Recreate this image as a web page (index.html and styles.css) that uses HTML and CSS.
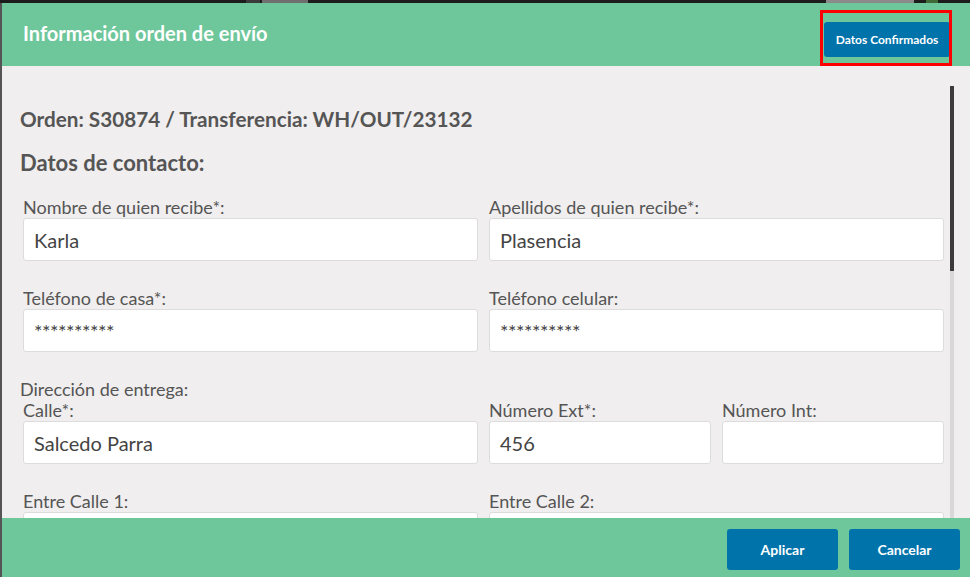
FILE: index.html
```html
<!DOCTYPE html>
<html lang="es">
<head>
<meta charset="utf-8">
<title>Información orden de envío</title>
<link rel="stylesheet" href="styles.css">
</head>
<body>
<div class="page">
  <div class="backdrop-top">
    <span class="bd bd-a"></span>
    <span class="bd bd-b"></span>
    <span class="bd bd-c"></span>
    <span class="bd bd-d"></span>
  </div>
  <div class="backdrop-row">
    <div class="backdrop-left"></div>
    <div class="modal">
      <header class="modal-header">
        <h1 class="modal-title">Información orden de envío</h1>
        <button class="btn btn-confirm" type="button">Datos Confirmados</button>
        <span class="annotation"></span>
      </header>
      <section class="modal-body">
        <div class="content">
          <h2 class="order-title">Orden: S30874 / Transferencia: WH/OUT/23132</h2>
          <h3 class="section-title">Datos de contacto:</h3>

          <div class="form-row two">
            <div class="field">
              <label class="label">Nombre de quien recibe*:</label>
              <div class="input">Karla</div>
            </div>
            <div class="field">
              <label class="label">Apellidos de quien recibe*:</label>
              <div class="input">Plasencia</div>
            </div>
          </div>

          <div class="form-row two">
            <div class="field">
              <label class="label">Teléfono de casa*:</label>
              <div class="input masked">**********</div>
            </div>
            <div class="field">
              <label class="label">Teléfono celular:</label>
              <div class="input masked">**********</div>
            </div>
          </div>

          <div class="group-label">Dirección de entrega:</div>
          <div class="form-row two tight">
            <div class="field">
              <label class="label">Calle*:</label>
              <div class="input">Salcedo Parra</div>
            </div>
            <div class="sub-grid">
              <div class="field">
                <label class="label">Número Ext*:</label>
                <div class="input">456</div>
              </div>
              <div class="field">
                <label class="label">Número Int:</label>
                <div class="input"></div>
              </div>
            </div>
          </div>

          <div class="form-row two">
            <div class="field">
              <label class="label">Entre Calle 1:</label>
              <div class="input"></div>
            </div>
            <div class="field">
              <label class="label">Entre Calle 2:</label>
              <div class="input"></div>
            </div>
          </div>
        </div>
        <div class="scrollbar">
          <div class="thumb"></div>
          <div class="track"></div>
        </div>
      </section>
      <footer class="modal-footer">
        <button class="btn btn-footer" type="button">Aplicar</button>
        <button class="btn btn-footer" type="button">Cancelar</button>
      </footer>
    </div>
  </div>
</div>
</body>
</html>
```
FILE: styles.css
```css
* { box-sizing: border-box; }

html, body {
  margin: 0;
  padding: 0;
  height: 100%;
  overflow: hidden;
  background: #1e1e1e;
  font-family: "Lato", "Liberation Sans", sans-serif;
}

.page {
  width: 970px;
  height: 577px;
  display: flex;
  flex-direction: column;
}

.backdrop-top {
  height: 3px;
  flex: none;
  display: flex;
  background: #1c1c1c;
}

.bd { display: block; height: 3px; }
.bd-a { width: 14px; margin-left: 246px; background: #3a3a3a; }
.bd-b { width: 46px; margin-left: 2px; background: #6f6f6f; }
.bd-c { width: 88px; margin-left: 518px; background: #8a8a8a; }
.bd-d { width: 12px; margin-left: 12px; background: #3f6a38; }

.backdrop-row {
  flex: 1;
  display: flex;
  min-height: 0;
}

.backdrop-left {
  width: 2px;
  flex: none;
  background: #555;
}

.modal {
  flex: 1;
  display: flex;
  flex-direction: column;
  min-width: 0;
}

.modal-header {
  position: relative;
  height: 63px;
  flex: none;
  background: #6ec69b;
  display: flex;
  align-items: flex-start;
  justify-content: space-between;
  padding: 0 20px 0 21px;
}

.modal-title {
  margin: 18px 0 0 0;
  font-size: 20px;
  line-height: 24px;
  font-weight: 700;
  color: #fff;
}

.btn {
  font-family: "Lato", "Liberation Sans", sans-serif;
  border: none;
  color: #fff;
  font-weight: 700;
  background: #0073aa;
  cursor: pointer;
  padding: 0;
}

.btn-confirm {
  margin-top: 19px;
  width: 126px;
  height: 35px;
  border-radius: 3px;
  font-size: 12px;
}

.annotation {
  position: absolute;
  left: 818px;
  top: 7px;
  width: 132px;
  height: 56px;
  border: 3px solid #ff0000;
  pointer-events: none;
}

.modal-body {
  flex: 1;
  min-height: 0;
  background: #f0eeee;
  display: flex;
  overflow: hidden;
  padding: 0 16px 0 16px;
}

.content {
  flex: 1;
  min-width: 0;
  padding-top: 41px;
}

.order-title {
  margin: 0 0 0 2px;
  font-size: 20.7px;
  line-height: 24px;
  font-weight: 700;
  color: #555;
}

.section-title {
  margin: 19px 0 0 2px;
  font-size: 22px;
  line-height: 26px;
  font-weight: 700;
  color: #555;
}

.form-row {
  display: grid;
  grid-template-columns: 1fr 1fr;
  column-gap: 11px;
  margin: 21px 0 0 5px;
}

.form-row + .form-row,
.group-label {
  margin-top: 27px;
}

.form-row.tight { margin-top: 1px; }

.sub-grid {
  display: grid;
  grid-template-columns: 1fr 1fr;
  column-gap: 11px;
}

.field {
  display: flex;
  flex-direction: column;
  min-width: 0;
}

.label,
.group-label {
  display: block;
  font-size: 18px;
  line-height: 20px;
  color: #555;
}

.group-label { margin-left: 2px; }

.input {
  margin-top: 1px;
  height: 43px;
  background: #fff;
  border: 1px solid #dcdcdc;
  border-radius: 3px;
  padding: 9px 10px;
  font-size: 20px;
  line-height: 24px;
  color: #444;
  white-space: nowrap;
  overflow: hidden;
}

.input.masked { letter-spacing: -0.5px; }

.scrollbar {
  width: 4px;
  flex: none;
  margin-left: 6px;
  margin-top: 20px;
  display: flex;
  flex-direction: column;
}

.thumb {
  height: 185px;
  background: #3b3b3b;
}

.track {
  flex: 1;
  background: #d8d8d8;
}

.modal-footer {
  height: 59px;
  flex: none;
  background: #6ec69b;
  display: flex;
  justify-content: flex-end;
  align-items: flex-start;
  gap: 11px;
  padding: 11px 10px 0 0;
}

.btn-footer {
  width: 111px;
  height: 41px;
  border-radius: 3px;
  font-size: 14px;
}
```
